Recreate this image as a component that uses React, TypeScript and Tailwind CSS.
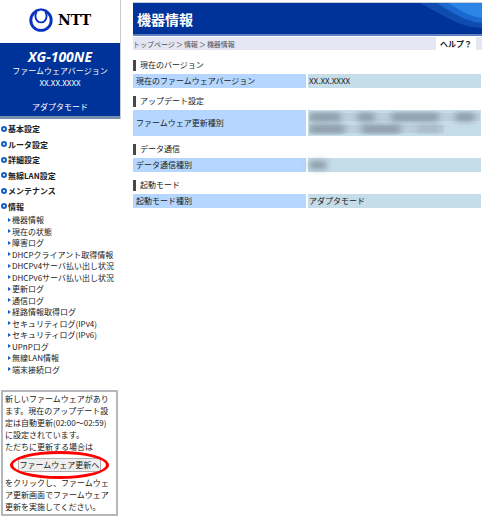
import { ReactNode } from 'react';

const mainMenu = ['基本設定', 'ルータ設定', '詳細設定', '無線LAN設定', 'メンテナンス', '情報'];

const infoMenu = [
    '機器情報',
    '現在の状態',
    '障害ログ',
    'DHCPクライアント取得情報',
    'DHCPv4サーバ払い出し状況',
    'DHCPv6サーバ払い出し状況',
    '更新ログ',
    '通信ログ',
    '経路情報取得ログ',
    'セキュリティログ(IPv4)',
    'セキュリティログ(IPv6)',
    'UPnPログ',
    '無線LAN情報',
    '端末接続ログ',
];

function Logo() {
    return (
        <div className="flex h-10 items-center justify-center gap-[5px]">
            <svg width="24" height="24" viewBox="0 0 24 24" fill="none" stroke="#0a32c0">
                <circle cx="12" cy="12.200" r="10.200" strokeWidth="2.900" />
                <ellipse cx="12" cy="8" rx="5.600" ry="6.400" fill="#fff" strokeWidth="1.900" />
                <path d="M8.500 3.500C9.500 5.500 14.500 5.500 15.500 3.500" stroke="#fff" strokeWidth="1.200" />
            </svg>
            <span className="font-['DejaVu_Serif',serif] text-[14px] leading-5 font-bold text-black">NTT</span>
        </div>
    );
}

function Sidebar() {
    return (
        <aside className="w-[121px] shrink-0">
            <div className="border-r border-[#c8c8d4]">
                <Logo />
                <div className="mt-[3px] border-b-[3px] border-[#7890b0] bg-[#003399] pt-[6px] pb-[3px] text-center leading-3 text-white">
                    <p className="font-['Open_Sans',sans-serif] text-[14px] leading-[15px] font-bold italic">XG-100NE</p>
                    <p className="mt-px">ファームウェアバージョン</p>
                    <p>XX.XX.XXXX</p>
                    <p className="mt-3">アダプタモード</p>
                </div>
            </div>

            <nav>
                <ul className="mt-[2px] flex h-[93px] flex-col justify-between pl-px leading-[15px] font-bold">
                    {mainMenu.map((item) => (
                        <li key={item}>
                            <a href="#" className="flex items-center gap-px">
                                <span className="size-[6px] rounded-full border-2 border-[#1460c8]"></span>
                                {item}
                            </a>
                        </li>
                    ))}
                </ul>
                <ul className="flex h-[161px] flex-col justify-between pl-2 leading-[11px]">
                    {infoMenu.map((item) => (
                        <li key={item}>
                            <a href="#" className="flex items-center gap-px whitespace-nowrap">
                                <svg width="3" height="4" viewBox="0 0 3 4" fill="#1460c8">
                                    <path d="M0 0L3 2L0 4Z" />
                                </svg>
                                {item}
                            </a>
                        </li>
                    ))}
                </ul>
            </nav>

            <div className="mt-[15px] mr-[3px] ml-px border-2 border-[#b4b8bc] px-[2px] py-px leading-3">
                <p>
                    新しいファームウェアがあり<br />ます。現在のアップデート設<br />定は自動更新(02:00～02:59)<br />に設定されています。<br />ただちに更新する場合は
                </p>
                <div className="relative my-[5px] flex justify-center">
                    <button className="rounded-[2px] border border-[#b0b0b0] bg-[#eeeeee] px-px leading-3 whitespace-nowrap">
                        ファームウェア更新へ
                    </button>
                    <div className="absolute -inset-y-[7px] inset-x-[5px] rounded-[50%] border-[3px] border-[#ff0000]"></div>
                </div>
                <p>
                    をクリックし、ファームウェ<br />ア更新画面でファームウェア<br />更新を実施してください。
                </p>
            </div>
        </aside>
    );
}

function Section({ title, label, children }: { title: string; label: string; children: ReactNode }) {
    return (
        <section>
            <h2 className="mb-[3px] flex items-center gap-1 leading-3">
                <span className="h-[11px] w-[3px] bg-[#484848]"></span>
                {title}
            </h2>
            <table className="w-full table-fixed border-collapse">
                <tbody>
                    <tr>
                        <th scope="row" className="border-r-2 border-white bg-[#b4d6ff] px-[3px] py-px text-left leading-3 font-normal">
                            {label}
                        </th>
                        <td className="bg-[#c5dde8] px-px py-px leading-3">{children}</td>
                    </tr>
                </tbody>
            </table>
        </section>
    );
}

function Masked({ className }: { className: string }) {
    return <span className={`block h-2 rounded-full bg-[#8796a3] blur-[3px] ${className}`}></span>;
}

export default function App() {
    return (
        <div className="flex min-h-screen bg-white pr-[18px] font-['Noto_Sans_CJK_JP',sans-serif] text-[8px] text-[#202020]">
            <Sidebar />
            <main className="ml-3 min-w-0 flex-1 pt-[2px]">
                <header className="relative flex h-[34px] items-center overflow-hidden border-t border-b-2 border-t-[#c8ccd8] border-b-[#6080c0] bg-[#003399]">
                    <svg className="absolute top-0 right-0" width="62" height="32" viewBox="0 0 62 32">
                        <path d="M0 0H62V25C50 25 36 20 22 12Z" fill="#0f4cb0" />
                        <path d="M17 0H62V20C50 19 38 13 28 7Z" fill="#1a68d0" />
                        <path d="M28 0H62V15C54 14 46 11 38 6Z" fill="#2c84e4" />
                    </svg>
                    <h1 className="pl-1 text-[14px] leading-5 font-bold text-white">機器情報</h1>
                </header>

                <div className="mt-px flex h-[13px] items-center bg-[#e5e6f4] pr-[6px]">
                    <nav className="flex flex-1 gap-px text-[7px] leading-3 text-[#505050]">
                        <a href="#">トップページ</a>
                        <span>＞</span>
                        <a href="#">情報</a>
                        <span>＞</span>
                        <span>機器情報</span>
                    </nav>
                    <a href="#" className="bg-white px-1 leading-[13px] font-bold">ヘルプ？</a>
                </div>

                <div className="mt-[9px] flex flex-col gap-[7px] pr-px">
                    <Section title="現在のバージョン" label="現在のファームウェアバージョン">XX.XX.XXXX</Section>
                    <Section title="アップデート設定" label="ファームウェア更新種別">
                        <div className="flex h-6 flex-col justify-around overflow-hidden">
                            <div className="flex gap-4 bg-[#bccfdb]">
                                <Masked className="w-[32px]" />
                                <Masked className="w-[18px]" />
                                <Masked className="w-[48px]" />
                                <Masked className="w-[20px]" />
                            </div>
                            <div className="mr-[36px] flex gap-4 bg-[#bccfdb]">
                                <Masked className="w-[36px]" />
                                <Masked className="w-[40px]" />
                                <Masked className="w-[24px] opacity-40" />
                            </div>
                        </div>
                    </Section>
                    <Section title="データ通信" label="データ通信種別">
                        <div className="flex h-3 items-center">
                            <Masked className="w-[18px]" />
                        </div>
                    </Section>
                    <Section title="起動モード" label="起動モード種別">アダプタモード</Section>
                </div>
            </main>
        </div>
    );
}
